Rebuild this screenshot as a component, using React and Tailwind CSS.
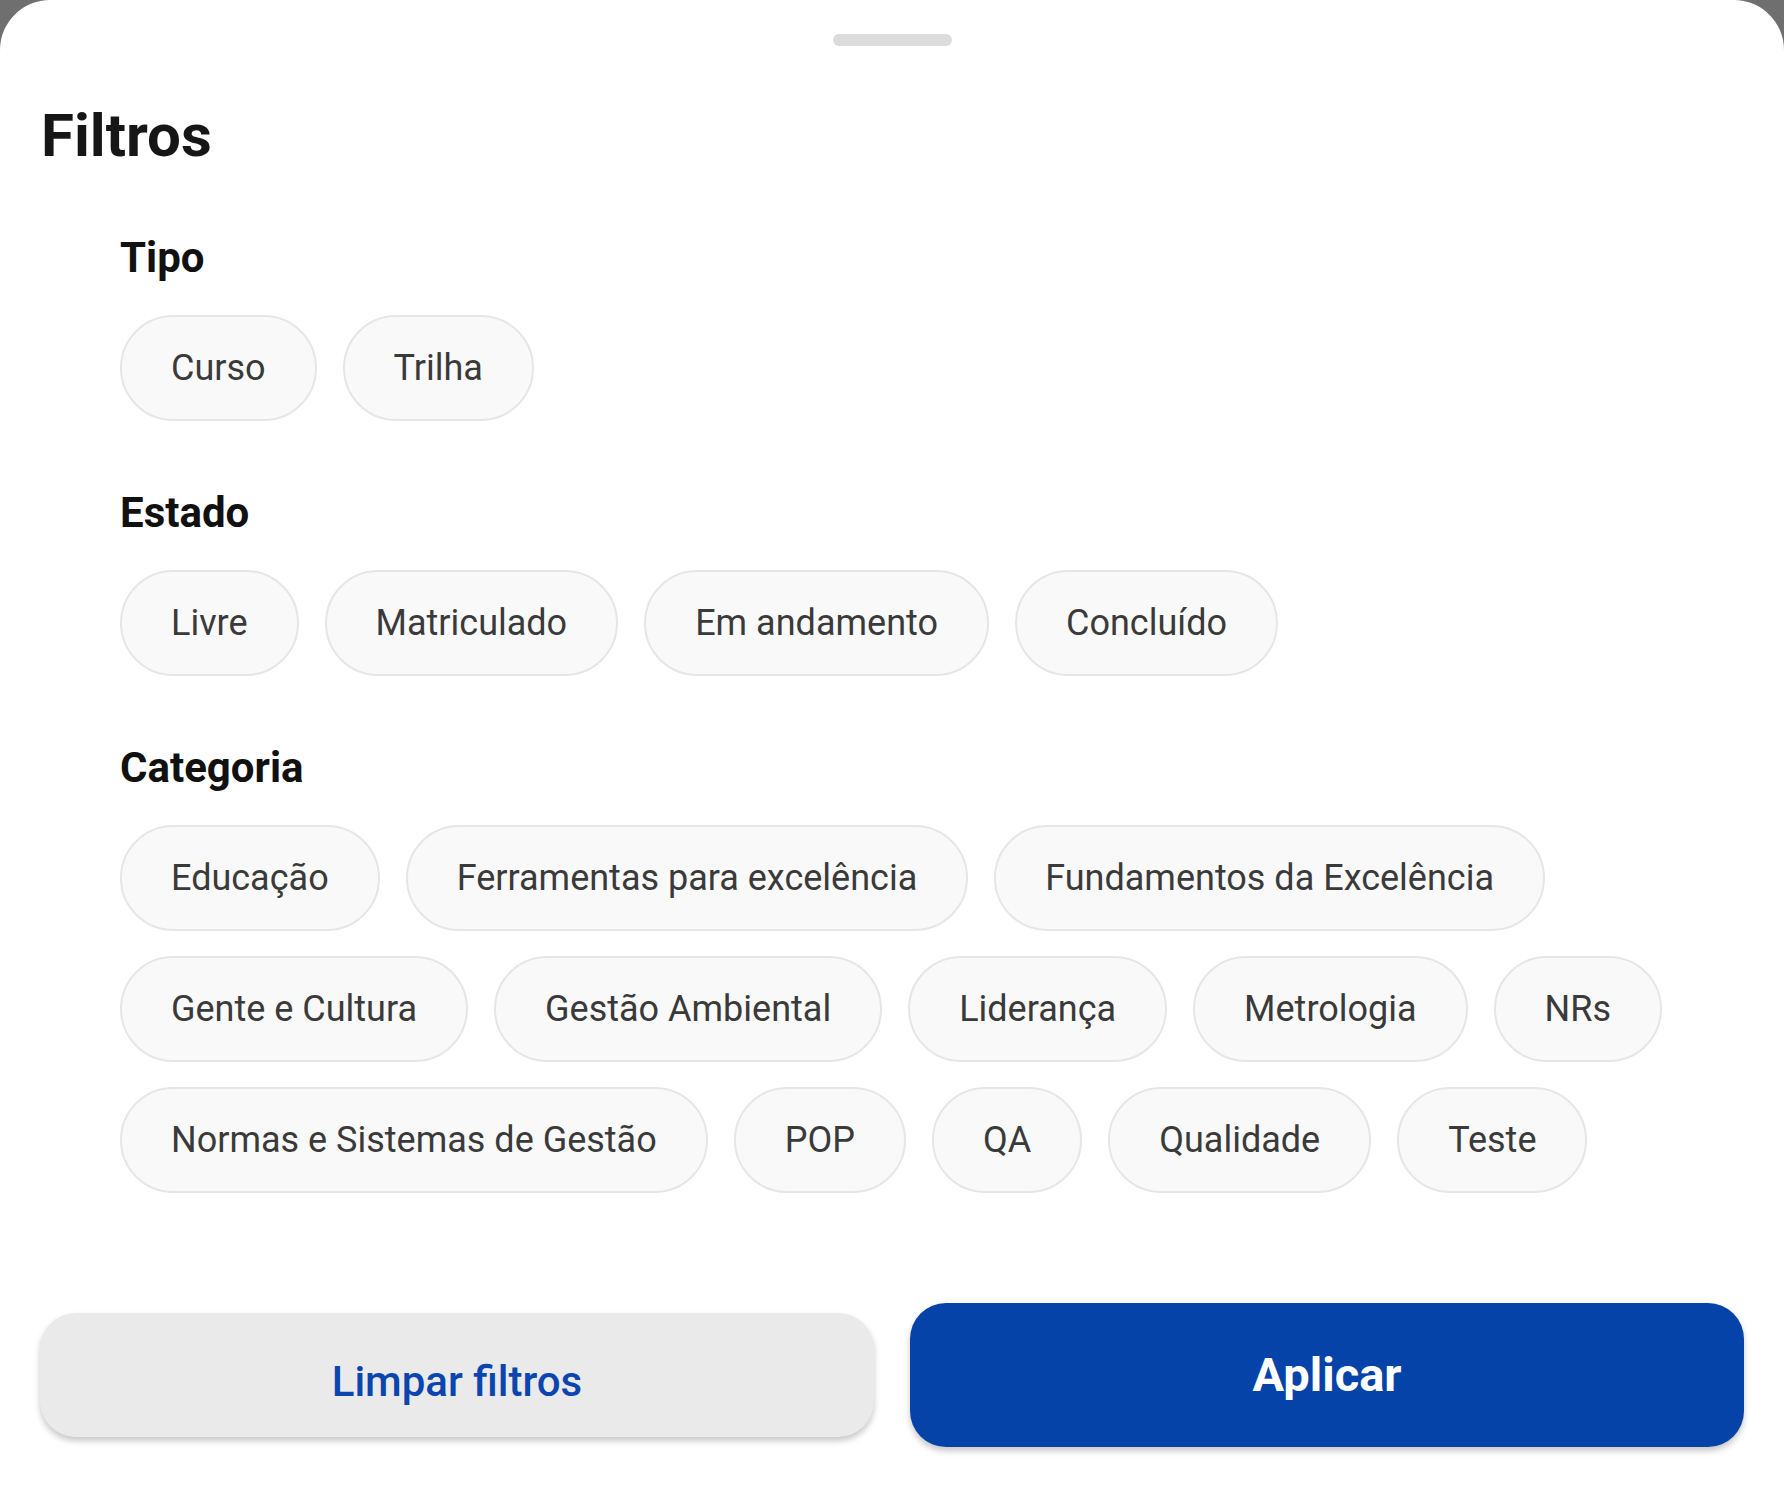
import React from 'react';

const SECTIONS = [
  { title: 'Tipo', items: ['Curso', 'Trilha'] },
  { title: 'Estado', items: ['Livre', 'Matriculado', 'Em andamento', 'Concluído'] },
  {
    title: 'Categoria',
    items: [
      'Educação', 'Ferramentas para excelência', 'Fundamentos da Excelência',
      'Gente e Cultura', 'Gestão Ambiental', 'Liderança', 'Metrologia', 'NRs',
      'Normas e Sistemas de Gestão', 'POP', 'QA', 'Qualidade', 'Teste',
    ],
  },
];

function Chip({ label }) {
  return (
    <button className="h-[106px] px-[49px] rounded-full border-2 border-[#e6e6e6] bg-[#f9f9f9] text-[36px] text-[#3a3a3a] flex items-center">
      {label}
    </button>
  );
}

function Section({ title, items }) {
  return (
    <div>
      <h3 className="text-[42px] leading-[48px] font-bold text-[#111]">{title}</h3>
      <div className="mt-[33px] flex flex-wrap gap-x-[26px] gap-y-[25px]">
        {items.map((item) => (
          <Chip key={item} label={item} />
        ))}
      </div>
    </div>
  );
}

export default function App() {
  return (
    <div className="min-h-screen bg-[#6f6f6f] font-['Roboto',sans-serif]">
      <div className="min-h-screen bg-white rounded-t-[50px] flex flex-col">
        <div className="pt-[34px] flex justify-center">
          <div className="w-[119px] h-[12px] rounded-full bg-[#dcdcdc]" />
        </div>

        <h2 className="mt-[54px] pl-[41px] text-[60px] leading-[72px] font-bold text-[#161616]">Filtros</h2>

        <div className="mt-[62px] pl-[120px] pr-[41px] flex flex-col gap-[68px]">
          {SECTIONS.map((s) => (
            <Section key={s.title} title={s.title} items={s.items} />
          ))}
        </div>

        <div className="flex-1" />

        <div className="px-[40px] pb-[41px] flex items-center gap-[36px]">
          <button className="flex-1 h-[124px] pt-[12px] rounded-[36px] bg-[#eaeaea] text-[42px] font-medium text-[#0b45b0] shadow-[0_4px_6px_rgba(0,0,0,0.22)]">
            Limpar filtros
          </button>
          <button className="flex-1 h-[144px] rounded-[36px] bg-[#0543a8] text-[47px] font-bold text-white shadow-[0_4px_6px_rgba(0,0,0,0.22)]">
            Aplicar
          </button>
        </div>
      </div>
    </div>
  );
}
